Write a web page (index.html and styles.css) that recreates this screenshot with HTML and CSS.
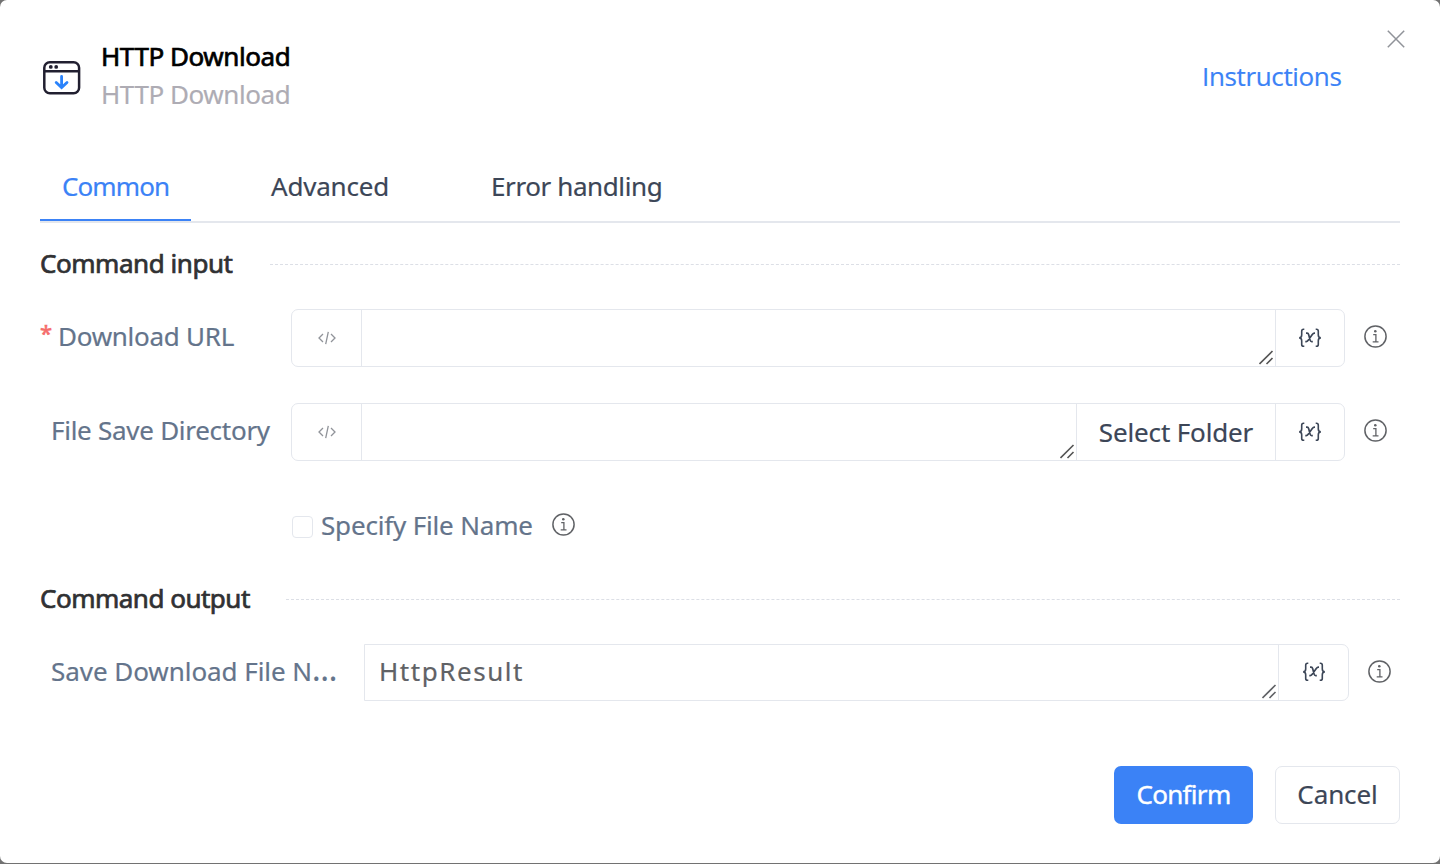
FILE: index.html
```
<!DOCTYPE html>
<html lang="en">
<head>
<meta charset="utf-8">
<title>HTTP Download</title>
<link rel="stylesheet" href="styles.css">
</head>
<body>
<svg class="defs" width="0" height="0">
  <symbol id="info" viewBox="0 0 24 24">
    <circle cx="11.5" cy="11.5" r="10.6" fill="none" stroke="currentColor" stroke-width="1.5"/>
    <circle cx="11.3" cy="6.2" r="1.3" fill="currentColor"/>
    <path d="M9.2 9.7h2.7v7M8.7 16.9h5.8" fill="none" stroke="currentColor" stroke-width="1.3"/>
  </symbol>
  <symbol id="code" viewBox="0 0 18 14">
    <path d="M5 3L1 7l4 4M13 3l4 4-4 4M10.3.8L7.7 13.2" fill="none" stroke="currentColor" stroke-width="1.3"/>
  </symbol>
  <symbol id="var" viewBox="0 0 24 20">
    <path d="M6.3 1.2H5.6Q3.7 1.2 3.7 3.2V7Q3.7 9.7 1.2 9.9Q3.7 10.1 3.7 12.8V16.4Q3.7 18.3 5.6 18.3H6.3M17.7 1.2H18.4Q20.3 1.2 20.3 3.2V7Q20.3 9.7 22.8 9.9Q20.3 10.1 20.3 12.8V16.4Q20.3 18.3 18.4 18.3H17.7" fill="none" stroke="currentColor" stroke-width="1.6"/>
    <path d="M8 5.2h1.1q1.2 0 1.6 1.5l1.4 5.4q.4 1.5 1.6 1.5h1.1M17 5.2h-.6q-1.1 0-2.1 1.4l-4.1 5.6q-1 1.4-2.1 1.4h-.8" fill="none" stroke="currentColor" stroke-width="1.7"/>
  </symbol>
  <symbol id="grip" viewBox="0 0 15 15">
    <path d="M.5 14L13.5 1M7.5 14l6-6" fill="none" stroke="currentColor" stroke-width="1.6"/>
  </symbol>
</svg>
<main class="dialog">
  <header class="header">
    <svg class="logo" viewBox="0 0 38 34">
      <rect x="1.3" y="1.3" width="34.8" height="31" rx="5.5" fill="none" stroke="#211f30" stroke-width="2.5"/>
      <path d="M1.5 10.2h34.6" stroke="#211f30" stroke-width="2.5"/>
      <circle cx="7.8" cy="5.9" r="1.9" fill="#211f30"/><circle cx="13.2" cy="5.9" r="1.9" fill="#211f30"/>
      <path d="M18.6 15.4v11M13.2 21.4l5.4 5.2 5.4-5.2" fill="none" stroke="#2b83fb" stroke-width="2.8" stroke-linecap="round"/>
    </svg>
    <div class="titles">
      <div class="title">HTTP Download</div>
      <div class="subtitle">HTTP Download</div>
    </div>
    <a class="instructions">Instructions</a>
    <svg class="close" viewBox="0 0 18 18"><path d="M.8.8l16.4 16.4M17.2.8L.8 17.2" stroke="#909399" stroke-width="1.5"/></svg>
  </header>
  <nav class="tabs">
    <div class="tab tab-common">Common</div>
    <div class="tab tab-advanced">Advanced</div>
    <div class="tab tab-error">Error handling</div>
  </nav>
  <div class="section"><h2 class="section-title">Command input</h2><span class="rule"></span></div>
  <div class="row row-url">
    <label class="label label-url"><span class="star">*</span><span class="url-text">Download URL</span></label>
    <div class="group">
      <div class="prefix"><svg class="i-code"><use href="#code"/></svg></div>
      <div class="field"><svg class="i-grip"><use href="#grip"/></svg></div>
      <div class="suffix"><svg class="i-var"><use href="#var"/></svg></div>
    </div>
    <svg class="i-info"><use href="#info"/></svg>
  </div>
  <div class="row row-dir">
    <label class="label label-dir">File Save Directory</label>
    <div class="group">
      <div class="prefix"><svg class="i-code"><use href="#code"/></svg></div>
      <div class="field"><svg class="i-grip"><use href="#grip"/></svg></div>
      <div class="folder">Select Folder</div>
      <div class="suffix"><svg class="i-var"><use href="#var"/></svg></div>
    </div>
    <svg class="i-info"><use href="#info"/></svg>
  </div>
  <div class="check-row">
    <span class="checkbox"></span>
    <span class="check-label">Specify File Name</span>
    <svg class="i-info i-info-check"><use href="#info"/></svg>
  </div>
  <div class="section section-out"><h2 class="section-title title-out">Command output</h2><span class="rule"></span></div>
  <div class="row row-out">
    <label class="label label-out">Save Download File N<span class="dots">…</span></label>
    <div class="group group-out">
      <div class="field field-out">HttpResult<svg class="i-grip"><use href="#grip"/></svg></div>
      <div class="suffix suffix-out"><svg class="i-var"><use href="#var"/></svg></div>
    </div>
    <svg class="i-info"><use href="#info"/></svg>
  </div>
  <footer class="footer">
    <div class="btn confirm">Confirm</div>
    <div class="btn cancel">Cancel</div>
  </footer>
</main>
</body>
</html>
```
FILE: styles.css
```
* { box-sizing: border-box; }
body {
  margin: 0;
  height: 864px;
  overflow: hidden;
  background: #727272;
  font: 26px/38px "Noto Sans", "Open Sans", sans-serif;
  color: #3c4657;
  white-space: nowrap;
  -webkit-text-stroke: .2px currentColor;
}
svg { display: block; flex: none; }
.defs { position: absolute; }
.dialog {
  width: 1440px;
  height: 863px;
  padding: 0 40px;
  background: #fff;
  border-radius: 7px;
}
.header { display: flex; height: 151px; }
.logo { width: 38px; height: 34px; margin: 61px 0 0 3px; }
.titles { flex: none; width: 1103px; margin: 37px 0 0 18px; padding-left: 2px; }
.title { color: #000; letter-spacing: -.43px; -webkit-text-stroke: .7px #000; }
.subtitle { color: #aeacb4; letter-spacing: -.43px; }
.instructions {
  flex: none;
  width: 140px;
  margin-top: 57px;
  color: #3b82f6;
  font-family: "Open Sans", sans-serif;
  letter-spacing: -.35px;
}
.close { width: 18px; height: 18px; margin: 30px -5px 0 45px; }
.tabs { display: flex; gap: 58px; height: 72px; border-bottom: 2px solid #e4e7ed; }
.tab { height: 70px; padding-left: 22px; line-height: 71px; }
.tab-common { width: 151px; color: #3b82f6; border-bottom: 2px solid #3b82f6; letter-spacing: -.9px; }
.tab-advanced { width: 162px; letter-spacing: -.2px; }
.tab-error { letter-spacing: -.4px; }
.section { display: flex; align-items: center; height: 38px; margin-top: 21px; }
.section-title {
  width: 230px;
  margin: 0;
  font-size: 26px;
  font-weight: 400;
  color: #303133;
  letter-spacing: -.45px;
  -webkit-text-stroke: .7px #303133;
}
.title-out { width: 246px; letter-spacing: -.5px; }
.rule { flex: 1; height: 0; border-top: 1px dashed #dcdfe6; margin-top: 3px; }
.row { display: flex; height: 58px; }
.row-url { margin-top: 27px; }
.row-dir { margin-top: 36px; }
.label { flex: none; width: 251px; line-height: 55px; color: #64748b; letter-spacing: -.27px; }
.label-url { display: flex; }
.label-dir { padding-left: 11px; }
.label-out { padding-left: 11px; }
.star { width: 18px; color: #f56c6c; font-size: 22px; line-height: 46px; -webkit-text-stroke: .6px #f56c6c; }
.group {
  display: flex;
  width: 1054px;
  border: 1px solid #e4e7ed;
  border-radius: 7px;
}
.prefix, .suffix, .folder { display: flex; align-items: center; justify-content: center; }
.prefix { width: 70px; border-right: 1px solid #e4e7ed; color: #909399; }
.suffix { width: 69px; padding-right: 1px; border-left: 1px solid #e4e7ed; }
.folder { width: 199px; padding-bottom: 1px; border-left: 1px solid #e4e7ed; letter-spacing: -.15px; }
.field { flex: 1; display: flex; align-items: flex-end; justify-content: flex-end; padding: 0 1px 1px 0; color: #555; }
.i-code { width: 18px; height: 14px; }
.i-var { width: 24px; height: 20px; }
.i-grip { width: 15px; height: 15px; }
.i-info { width: 24px; height: 24px; margin: 16px 0 0 19px; color: #606266; }
.check-row { display: flex; height: 38px; margin: 46px 0 0 252px; }
.checkbox { width: 21px; height: 22px; margin-top: 9px; border: 1px solid #e4e7ed; border-radius: 4px; }
.check-label { width: 231px; padding-left: 8px; line-height: 37px; color: #64748b; letter-spacing: -.17px; }
.i-info-check { margin: 6px 0 0 8px; }
.section-out { margin-top: 34px; }
.row-out { height: 57px; margin-top: 27px; }
.label-out { width: 324px; letter-spacing: -.05px; }
.dots { font-size: 32px; line-height: 0; }
.group-out { width: 985px; border-radius: 0 7px 7px 0; }
.field-out { justify-content: space-between; padding-left: 14px; color: #606266; line-height: 56px; letter-spacing: 1.55px; }
.suffix-out { width: 70px; padding: 0 0 2px; }
.footer { display: flex; justify-content: flex-end; gap: 22px; margin-top: 65px; }
.btn { height: 58px; line-height: 56px; border-radius: 7px; text-align: center; }
.confirm { width: 139px; background: #3b82f6; color: #fff; letter-spacing: -.7px; -webkit-text-stroke: .4px #fff; }
.cancel { width: 125px; border: 1px solid #e4e7ed; line-height: 54px; letter-spacing: -.1px; }
```
